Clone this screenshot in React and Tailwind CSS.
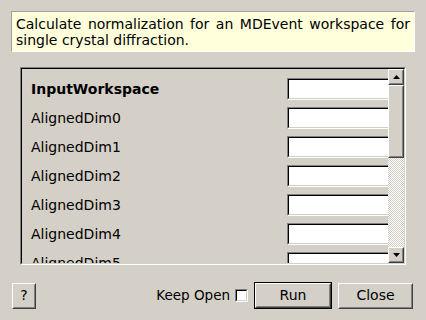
import React from 'react';

const font = { fontFamily: '"DejaVu Sans", sans-serif' };

const rows = [
    'InputWorkspace',
    'AlignedDim0',
    'AlignedDim1',
    'AlignedDim2',
    'AlignedDim3',
    'AlignedDim4',
    'AlignedDim5',
];

const Raised = ({ className = '', children }) => (
    <div className={`border border-t-white border-l-white border-b-[#404040] border-r-[#404040] ${className}`}>
        <div className="w-full h-full border border-t-[#d4d0c8] border-l-[#d4d0c8] border-b-[#808080] border-r-[#808080] flex items-center justify-center">
            {children}
        </div>
    </div>
);

const Field = () => (
    <div className="w-[112px] h-[22px] shrink-0 border border-t-[#808080] border-l-[#808080] border-b-white border-r-white">
        <div className="w-full h-full bg-white border border-t-black border-l-black border-b-[#d4d0c8] border-r-[#d4d0c8]" />
    </div>
);

const App = () => {
    return (
        <div className="w-[426px] h-[320px] bg-[#d4d0c8] text-black text-[14px] flex flex-col overflow-hidden" style={font}>
            {/* Description */}
            <div className="mt-[11px] ml-[11px] w-[404px] h-[41px] border border-t-[#a0a0a0] border-l-[#a0a0a0] border-b-white border-r-white bg-[#ffffdc] px-[4px] pt-[4px] leading-[16px] text-justify">
                Calculate normalization for an MDEvent workspace for single crystal diffraction.
            </div>

            {/* Property list */}
            <div className="mt-[15px] ml-[20px] w-[386px] h-[198px] border border-t-[#808080] border-l-[#808080] border-b-white border-r-white">
                <div className="w-full h-full border border-t-black border-l-black border-b-[#d4d0c8] border-r-[#d4d0c8] flex">
                    <div className="flex-1 overflow-hidden">
                        <div className="pt-[9px] flex flex-col gap-[7px]">
                            {rows.map((r, i) => (
                                <div key={r} className="h-[22px] flex items-center pl-[9px]">
                                    <span className={`flex-1 ${i === 0 ? 'font-bold' : ''}`}>{r}</span>
                                    <div className="w-[101px] overflow-hidden flex">
                                        <Field />
                                    </div>
                                </div>
                            ))}
                        </div>
                    </div>
                    {/* Scrollbar */}
                    <div className="w-[16px] flex flex-col">
                        <Raised className="h-[16px] bg-[#d4d0c8]">
                            <svg width="7" height="4" viewBox="0 0 7 4"><path d="M3.5 0L7 4H0z" fill="black" /></svg>
                        </Raised>
                        <Raised className="h-[73px] bg-[#d4d0c8]" />
                        <div className="flex-1 bg-[repeating-conic-gradient(#ffffff_0_25%,#d4d0c8_0_50%)] bg-[length:2px_2px]" />
                        <Raised className="h-[16px] bg-[#d4d0c8]">
                            <svg width="7" height="4" viewBox="0 0 7 4"><path d="M0 0H7L3.5 4z" fill="black" /></svg>
                        </Raised>
                    </div>
                </div>
            </div>

            {/* Buttons */}
            <div className="mt-[17px] flex items-center pl-[12px] pr-[13px]">
                <Raised className="w-[24px] h-[26px]">?</Raised>
                <span className="ml-auto text-[13.5px]">Keep Open</span>
                <div className="ml-[5px] w-[13px] h-[13px] border border-t-[#808080] border-l-[#808080] border-b-white border-r-white">
                    <div className="w-full h-full bg-white border border-t-black border-l-black border-b-[#d4d0c8] border-r-[#d4d0c8]" />
                </div>
                <div className="ml-[6px] w-[78px] h-[27px] border border-black">
                    <Raised className="w-full h-full">Run</Raised>
                </div>
                <Raised className="ml-[6px] w-[75px] h-[26px]">Close</Raised>
            </div>
        </div>
    );
};

export default App;
